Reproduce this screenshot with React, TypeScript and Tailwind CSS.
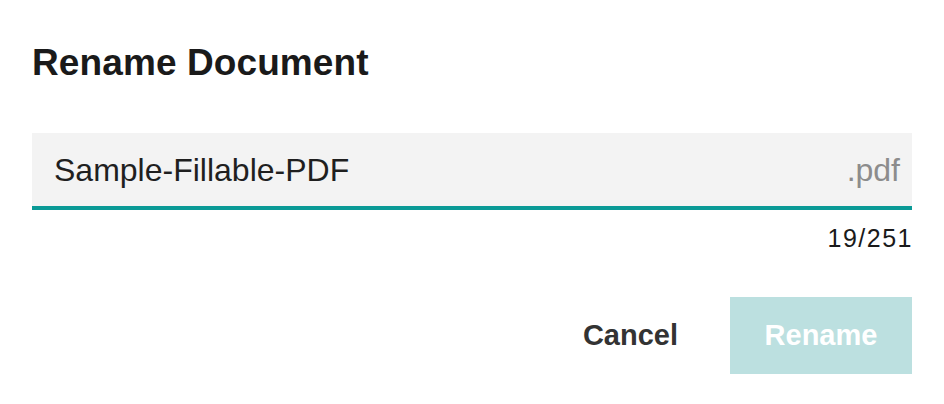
import { useState } from 'react';

const MAX_LENGTH = 251;

const RenameDialog = () => {
	const [fileName, setFileName] = useState('Sample-Fillable-PDF');

	return (
		<div className="w-[944px] h-[404px] bg-white px-[32px] font-['Liberation_Sans',Arial,sans-serif]">
			<h2 className="pt-[44px] text-[37px] leading-none font-bold text-[#1a1a1a] tracking-[0.1px]">
				Rename Document
			</h2>

			<div className="mt-[52px] flex items-center h-[77px] bg-[#f3f3f3] border-b-4 border-[#0a9a96] pl-[22px] pr-[12px]">
				<input
					className="flex-1 bg-transparent outline-none text-[32px] text-[#1f1f1f]"
					value={fileName}
					maxLength={MAX_LENGTH}
					onChange={(e) => setFileName(e.target.value)}
				/>
				<span className="text-[32px] text-[#8c8c8c]">.pdf</span>
			</div>

			<div className="mt-[16px] flex justify-end">
				<span className="text-[25px] leading-none tracking-[1.5px] mr-[-1px] text-[#1a1a1a]">
					{fileName.length}/{MAX_LENGTH}
				</span>
			</div>

			<div className="mt-[46px] flex justify-end items-center gap-[52px]">
				<button className="text-[29px] font-bold text-[#333333]">Cancel</button>
				<button
					disabled
					className="w-[182px] h-[77px] bg-[#bce0e0] text-[29px] font-bold text-white"
				>
					Rename
				</button>
			</div>
		</div>
	);
};

export default function App() {
	return <RenameDialog />;
}
